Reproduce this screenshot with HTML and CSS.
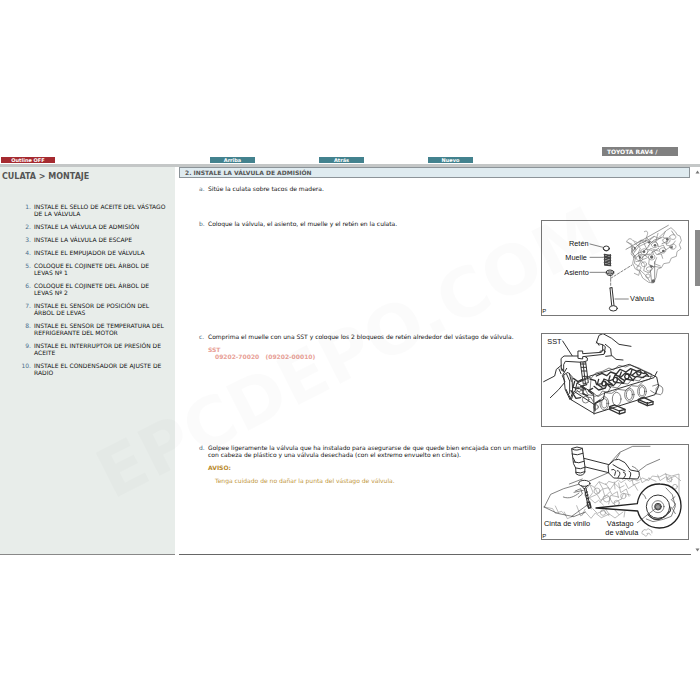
FILE: index.html
```
<!DOCTYPE html>
<html lang="es">
<head>
<meta charset="utf-8">
<meta name="viewport" content="width=device-width, initial-scale=1">
<title>Culata - Montaje</title>
<link rel="stylesheet" href="styles.css">
</head>
<body>
<div class="app">
  <header class="topbar">
    <button class="chip chip-red" type="button">Outline OFF</button>
    <nav class="pager">
      <a class="chip" href="#arriba">Arriba</a>
      <a class="chip" href="#atras">Atrás</a>
      <a class="chip" href="#nuevo">Nuevo</a>
    </nav>
    <div class="model">TOYOTA RAV4 /</div>
  </header>
  <div class="panes">
    <aside class="outline">
      <h1>CULATA &gt; MONTAJE</h1>
      <ol class="toc">
        <li>INSTALE EL SELLO DE ACEITE DEL VÁSTAGO<br>DE LA VÁLVULA</li>
        <li>INSTALE LA VÁLVULA DE ADMISIÓN</li>
        <li>INSTALE LA VÁLVULA DE ESCAPE</li>
        <li>INSTALE EL EMPUJADOR DE VÁLVULA</li>
        <li>COLOQUE EL COJINETE DEL ÁRBOL DE<br>LEVAS Nº 1</li>
        <li>COLOQUE EL COJINETE DEL ÁRBOL DE<br>LEVAS Nº 2</li>
        <li>INSTALE EL SENSOR DE POSICIÓN DEL<br>ÁRBOL DE LEVAS</li>
        <li>INSTALE EL SENSOR DE TEMPERATURA DEL<br>REFRIGERANTE DEL MOTOR</li>
        <li>INSTALE EL INTERRUPTOR DE PRESIÓN DE<br>ACEITE</li>
        <li>INSTALE EL CONDENSADOR DE AJUSTE DE<br>RADIO</li>
      </ol>
    </aside>
    <main class="content" id="arriba">
      <h2>2. INSTALE LA VÁLVULA DE ADMISIÓN</h2>
      <ol class="steps">
        <li class="step"><span class="mark">a.</span><div class="body"><p>Sitúe la culata sobre tacos de madera.</p></div></li>
        <li class="step"><span class="mark">b.</span><div class="body"><p>Coloque la válvula, el asiento, el muelle y el retén en la culata.</p></div>
          <figure>
            <svg viewBox="22 18 438 282" role="img" aria-label="Retén, muelle, asiento y válvula">
              <g class="thin">
                <path d="M166 87L205 97M166 127H206M166 172H213M241 252H281"/>
                <path d="M228 190L292 150M228 180V214" stroke-dasharray="7 5"/>
              </g>
              <g class="ink">
                <ellipse cx="215" cy="100" rx="9" ry="7"/><path d="M206 101c2 9 16 9 18 0"/>
                <ellipse cx="226" cy="171" rx="11" ry="6"/><path d="M215 171v5c4 7 18 7 22 0v-5M220 171h12"/>
                <path d="M226 219l5 52M232 218l6 53M226 219q3-3 6-1"/><ellipse cx="236" cy="280" rx="12" ry="8"/>
              </g>
              <path class="coil" d="M209 118l19 3-19 5 19 3-19 5 19 3-19 5 19 3-18 5 18 2M210 121v29M227 119v33"/>
              <g class="soft deep">
                <path d="M276 80c5-14 15-9 19-3l14 6 10-8 14 4 25-15 13 5 25-23 13-8 13 12 6 10 8 3 4 14-6 12 5 12-12 9-2 14-15 5-6 14-17 3-6 11-13 6-4 25-8 16-14-2-18-13-9-20-13-7-8-17 5-23-8-14 1-19z"/>
                <path d="M329 50c10-6 12 4 8 12l-5 18M358 65l-22 18-24 12-16 21M370 55l-7 24 16-12M280 82l14 13-3 20 12 9-4 21 12 8 10-18 15-6M299 83l18 16-7 18 22 4 16-21 23 8"/>
                <path d="M350 88c9-11 22-6 19 4s-20 7-19-4M384 75c9-12 25-8 22 3s-22 9-22-3M405 64c6-9 21-5 18 4s-19 6-18-4M319 106c9-10 24-3 19 8s-25 4-19-8"/>
                <path d="M342 123c7-11 22-5 18 6s-24 5-18-6M375 103c8-10 22-4 18 6s-24 5-18-6M406 92c9-10 21-3 17 6s-23 4-17-6M306 126c6-9 21-6 18 6s-23 5-18-6"/>
                <path d="M304 140l15-4 12 13-4 18 16 7 16-20 20 4M321 144c8-8 18-1 14 7s-20 3-14-7M336 159c7-8 18-3 15 5s-20 5-15-5M307 156c5-7 15-1 11 6s-15 2-11-6M334 180c6-7 15-1 11 6s-16 2-11-6"/>
                <path d="M338 70l10 12 16-3 8 17 14-6 7 15 18-12M357 106l9 13 14-2 4 13M329 88l8 15 15 3 4 10M392 49l-8 18 14 5-3 18 15 4 12-16"/>
                <path d="M327 118l17 13-2 17 18 8M289 98l10 12M289 117l14 15M299 175l13 6 4-16 19 18 10 16M366 128l-7 18 18 7M312 92l7-15 12 9"/>
              </g>
              <g class="line"><path d="M274 103L401 31M291 111l20-22 26-14M296 127l15-13 16-5 17-16M340 93l17-17 24-8M350 114l22-14M312 138l18-17 16-4M360 140v60l-9 3-4-38M411 48l8 12M382 86l18-8M370 117l20-9"/></g>
              <g class="blob"><circle cx="361" cy="91" r="4"/><circle cx="386" cy="108" r="4"/><circle cx="351" cy="126" r="5"/><circle cx="328" cy="110" r="4"/><circle cx="398" cy="73" r="4"/><circle cx="356" cy="198" r="5"/><path d="M295 93l9 5-3 10zM337 81l12-4-5 10zM344 149l13 5-8 6zM405 97l10-4-2 9zM310 119l10 7-5 8z"/></g>
              <text x="103" y="92">Retén</text><text x="92" y="134">Muelle</text><text x="89" y="179">Asiento</text><text x="286" y="259">Válvula</text><text class="tiny" x="23" y="294">P</text>
            </svg>
          </figure>
        </li>
        <li class="step"><span class="mark">c.</span><div class="body"><p>Comprima el muelle con una SST y coloque los 2 bloqueos de retén alrededor del vástago de válvula.</p>
          <dl class="tool"><dt>SST</dt><dd>09202-70020 &nbsp; (09202-00010)</dd></dl></div>
          <figure>
            <svg viewBox="22 18 438 276" role="img" aria-label="Compresión del muelle con SST">
              <g class="line dark">
                <path d="M119 197l10-9 9 10 10-3 8 12 13 2 7 12M130 176l10 12 12-3 8 15 16 3M180 205l15-4 8-12 16 4 10-17 19 4 13-14 19 2 12-14 21 5 12-14 28 1"/>
                <path d="M170 150l13-15 20-5 20-10 13 6 17-14 20 5 14-6 26 9 15 8 23 10-5 15-20 7-16 15-20-2-16 14-25-3-18 12-21-2-20 12-23-18z"/>
                <ellipse cx="209" cy="226" rx="13" ry="20"/><ellipse cx="246" cy="213" rx="13" ry="20"/><ellipse cx="284" cy="200" rx="14" ry="20"/><ellipse cx="322" cy="190" rx="13" ry="19"/>
                <ellipse cx="209" cy="226" rx="8" ry="14"/><ellipse cx="284" cy="200" rx="9" ry="15"/><ellipse cx="322" cy="190" rx="8" ry="14"/>
                <circle cx="153" cy="215" r="10"/><circle cx="184" cy="237" r="7"/><circle cx="133" cy="184" r="7"/>
                <path d="M354 174l16-5 12 8c5 6 2 20-4 23l-16-3-14-9M371 173l-7 9 1 15"/>
              </g>
              <g class="bold">
                <path d="M166 153l16 5 4 12 16-3 6-14 15 6 13-5 5-13 18 6 13-12 20 7 15-12 22 7M185 144l17-8 14 7 12-11 17 6 11-14 18 8 14-10 20 8M178 175l14 11 20-6 5-13 19 6 9-10 21 3 7-13 21 4 11-12 20 4 13-10M192 154l-4 15 14 9M226 144l-5 17 12 8M260 132l-6 16 16 10M292 125l-5 15 16 8M211 162l16 16M247 149l17 15M281 140l15 18M330 133l12 12M174 181l-13 7 12 10M156 170l-18 5 15 9M145 172v26l14 5M116 151l14 10 11-6M120 160l-5 18 18 4M181 248v-22l15-10M109 188l15 23 14-2"/>
                <path d="M201 166c2-10 14-8 13 1s-12 9-13-1M235 155c2-10 14-8 13 1s-12 9-13-1M270 145c2-10 14-8 13 1s-12 9-13-1M306 134c2-10 14-8 13 1s-12 9-13-1"/>
                <path class="fill" d="M225 236l15-5 31 13v9l-17 5-29-14zM311 214l15-6 29 13v8l-17 4-27-12z"/>
                <path d="M254 248v9M271 244l-17 5-29-12M338 224v9M355 221l-17 5-27-11"/>
              </g>
              <g class="ink">
                <path d="M84 39l31 48"/>
                <path class="fill" d="M80 91l8-7 60 0 10 6v8l-14 5-52-3-5 10v20l-6-3z"/>
                <path class="fill" d="M131 69h13v8l56-4 5-8 7 5-4 9-64 7v7l-13-2z"/>
                <path class="fill" d="M138 102l15 0 8 62-14 4z"/>
                <path d="M139 108h14M140 118h14M142 129h14M145 145h14M145 104l7 60"/>
                <path d="M185 45l8-23 12-5 26 14 22 18 36 6M213 85l19-2 12 11 21 2M193 52l-7-10M191 47l13 3v18l-8 2M204 50l8 6-3 20M212 49l16 13 2 19"/>
                <path d="M81 111l-16 13-5 20-33 17M96 121l-13 22 8 19-19 23-25 24M73 123l6 14M80 120l9 12"/>
                <path d="M88 140l12-7 12 13 2 47-8 22-14-30zM96 139l9 20v37M104 136l6 24"/>
                <path d="M94 184l15 31 70 42 182-57 11-25-6-28-82-38-118 35-28 14"/>
                <path d="M110 215l8-25 60 39v29M178 229l28-15 4-20 24-7 124-38 9-18M121 190l6-25 50 31 1 33M127 165l40-17"/>
              </g>
              <text x="38" y="47">SST</text>
            </svg>
          </figure>
        </li>
        <li class="step"><span class="mark">d.</span><div class="body"><p>Golpee ligeramente la válvula que ha instalado para asegurarse de que quede bien encajada con un martillo con cabeza de plástico y una válvula desechada (con el extremo envuelto en cinta).</p>
          <div class="notice"><strong>AVISO:</strong><p>Tenga cuidado de no dañar la punta del vástago de válvula.</p></div></div>
          <figure>
            <svg viewBox="22 16 438 282" role="img" aria-label="Golpeo de la válvula con un martillo">
              <g class="soft">
                <path d="M155 147l11-12 13 8 14-17 21 9 8-10 17 5 12-9 8 8 17-11 9 7 14-6 8 5 17-9 18 8 11-14 21 3 17-9 20 6 22-6v88M155 148l-5 18 9 16-4 16 16 10"/>
                <path d="M166 136l9 22-12 16 18 16 11-8 14 14M180 143l9 18 15-13 7 23 14-14M193 127l12 21 16-4 11 21 16-9 3 18M213 132l13 18 14-19 14 14 14-7M239 127l2 21M252 130l6 29 17-11 8 22M272 130l9 17 18-12 10 17M292 119l4 17 18-8M316 111l6 18 22-13M342 115l22 10M369 106l7 17 17-11 17 14M393 101l5 19 23-11 17 14M167 173l20-9 11 18 24-12 13 22 23-13M197 188l11-18M222 193l6-26 24 5M259 180l8-19 20 5"/>
                <path d="M29 202l25 5 8 14 19-6 13 14M62 199l10 21M89 217l9 20 19-8M126 198l12 31 14-12 17 19 13-16 18 14 24-11 17 12 24-18M151 209l-9 18M174 207l14 14 18-8 17 15M213 208l11 17M238 208l15 17M271 213l-3 19M323 275q4-9 12-4 5-8 12 0 7 1 5 9M325 274c-6 3-4 12 3 10 2 7 9 7 11 0M337 281q8-4 11 5"/>
                <circle cx="187" cy="154" r="9"/><circle cx="216" cy="177" r="10"/><circle cx="266" cy="169" r="8"/><circle cx="246" cy="190" r="8"/><circle cx="205" cy="219" r="8"/><circle cx="404" cy="119" r="8"/><circle cx="421" cy="141" r="7"/>
              </g>
              <g class="thin"><path d="M222 75l33-37 39-18 52 0M228 96l-66 29-75 22-39 17-19 38M256 40l-12 19M312 94l24-18 39-17M104 133l39-15M118 158l28-6M86 172c17 7 33-1 47-12M28 202l40 19 49 10 35-14M122 154l16-7 5 16-12 10M293 80c9 4 16 8 18 16"/><path d="M111 230l47-34"/></g>
              <g class="ink">
                <path class="fill" d="M148 56l83 21-5 23-78-19z"/>
                <path class="fill" d="M112 26q15-8 31 0l8 56-1 18q-12 13-26 2l-1-17-6-12z"/>
                <path d="M112 28q14 8 31-2M112 43q16 6 33-2M118 67q14 6 30-2M123 85q14 6 28-2M123 98q14 5 28-2M116 55l6 13"/>
                <path class="fill" d="M221 77l18-16 13-2 19 10 16 22 26 5 1 12-5 10-72-3-14-14z"/>
                <path d="M231 90q8-4 12 5l-3 12M248 93q10 2 7 12l-5 9M266 97q9 3 6 11l-7 10M283 94q8 5 5 12l-4 12M235 75l15 9 21 10"/>
                <ellipse class="fill" cx="149" cy="131" rx="17" ry="9"/><path d="M140 138l9 10 10-11M149 146l12 57M154 146l13 57"/>
              </g>
              <g class="bold"><path d="M153 159l5-2M155 168l5-2M157 177l5-2M158 188l7-1 4 16-7 3z"/></g>
              <g class="ring">
                <path class="fill" d="M184 205l124-13c4-36 33-60 68-59 37 0 63 28 63 65s-28 67-65 67c-34 0-58-23-65-51z"/>
              </g>
              <g class="ink"><circle cx="370" cy="201" r="35"/><path d="M342 228q30 30 65-13M339 223q26 38 68-9l2-11"/></g>
              <g class="thin"><circle cx="370" cy="201" r="18"/><path d="M323 162q8 4 11 15M335 238l20 8 31-7 24-9 12-30-9-35-19-20M421 171l-11 9 13 13-10 14 9 15M308 249l58-45"/></g>
              <circle class="bolt" cx="370" cy="201" r="10"/><path class="thin" d="M363 198l7-4 7 4v7l-7 4-7-4z"/>
              <text x="28" y="259">Cinta de vinilo</text><text x="216" y="260">Vástago</text><text x="212" y="286">de válvula</text><text class="tiny" x="23" y="294">P</text>
            </svg>
          </figure>
        </li>
      </ol>
    </main>
    <div class="scroll" aria-hidden="true">
      <svg class="arrow" viewBox="0 0 10 8"><path d="M1 7L5 1 9 7z"/></svg>
      <span class="thumb"></span>
      <svg class="arrow arrow-end" viewBox="0 0 10 8"><path d="M1 1L5 7 9 1z"/></svg>
    </div>
  </div>
  <div class="watermark" aria-hidden="true">EPCDEPO.COM</div>
</div>
</body>
</html>
```
FILE: styles.css
```
* { box-sizing: border-box; }
body {
  margin: 0;
  padding-top: 143px;
  background: #fff;
  color: #111;
  font: 6px/7px "DejaVu Sans", Verdana, sans-serif;
}
h1, h2, p, ol, dl, dd, figure { margin: 0; padding: 0; }
ol { list-style: none; }

.app { position: relative; overflow: hidden; }

.topbar {
  display: flex;
  align-items: flex-end;
  height: 24px;
  padding: 0 22px 1px 1px;
  border-bottom: 3px solid #c4c7c7;
}
.chip {
  display: block;
  width: 45px;
  height: 6px;
  padding: 0;
  border: 0;
  background: #43828e;
  color: #fff;
  font: bold 5px/6px "DejaVu Sans", Verdana, sans-serif;
  text-align: center;
  text-decoration: none;
}
.chip-red { width: 54px; background: #a52a30; }
.pager { display: flex; gap: 64px; margin-left: 155px; }
.model {
  align-self: flex-start;
  width: 76px;
  height: 9px;
  margin: 4px 0 0 auto;
  padding-left: 5px;
  background: #808080;
  color: #fff;
  font-weight: bold;
  line-height: 10px;
}

.panes {
  display: grid;
  grid-template-columns: 175px minmax(0, 1fr) 5px;
  column-gap: 4px;
}
.outline { background: #e8edea; border-bottom: 1px solid #888; }
.outline h1 {
  padding: 5px 2px 0;
  color: #555;
  font-size: 8px;
  line-height: 9px;
}
.toc { padding: 22px 0 0 19px; counter-reset: item; }
.toc li {
  display: grid;
  grid-template-columns: 12px auto;
  column-gap: 3px;
  margin-bottom: 6px;
  counter-increment: item;
  white-space: nowrap;
}
.toc li::before {
  content: counter(item) ".";
  grid-row: 1 / 3;
  color: #4a6d8c;
  text-align: right;
}

.content { border-bottom: 1px solid #666; padding-bottom: 14px; }
.content h2 {
  margin-right: 1px;
  padding-left: 5px;
  border: 1px solid #8c9499;
  background: #dfebf0;
  color: #555;
  font-size: 6px;
  line-height: 9px;
}
.steps { padding: 7px 2px 0 20px; }
.step { display: flex; min-height: 35px; }
.step:nth-child(2) { margin-bottom: 17px; }
.step:nth-child(3) { margin-bottom: 17px; }
.mark { flex: 0 0 9px; color: #4d6678; }
.body { flex: 1; padding-right: 4px; }
.tool { padding-top: 6px; color: #e8a096; font-weight: bold; }
.tool dd { padding-left: 7px; }
.notice { padding-top: 6px; color: #bf9740; }
.notice strong { color: #b98a2c; }
.notice p { padding: 6px 7px 0; }

figure { flex: 0 0 148px; border: 1px solid #777; }
figure svg { display: block; width: 100%; }
svg path, svg circle, svg ellipse { fill: none; stroke-linejoin: round; stroke-linecap: round; }
.thin { stroke: #444; stroke-width: 2; }
.ink { stroke: #333; stroke-width: 3; }
.line { stroke: #666; stroke-width: 2; }
.line.dark { stroke: #444; }
.soft { stroke: #999; stroke-width: 2; }
.soft.deep { stroke: #808080; }
.bold { stroke: #333; stroke-width: 4; }
.coil { stroke: #444; stroke-width: 4; }
.ring { stroke: #222; stroke-width: 4; }
svg .fill { fill: #fff; }
.blob path, .blob circle { fill: #666; }
svg .bolt { fill: #999; stroke: #444; stroke-width: 3; }
figure text { fill: #111; font: 22px "Liberation Sans", Arial, sans-serif; }
figure .tiny { font-size: 18px; }

.scroll { display: flex; flex-direction: column; padding: 3px 0; }
.arrow { width: 5px; height: 4px; }
.arrow path { fill: #777; }
.arrow-end { margin-top: auto; }
.thumb { height: 56px; margin-top: 56px; background: #8a8a8a; }

.watermark {
  position: absolute;
  top: 51%;
  left: 50%;
  transform: translate(-50%, -50%) rotate(-27deg);
  color: rgba(0, 0, 0, 0.016);
  font-size: 68px;
  font-weight: bold;
  line-height: 1;
  white-space: nowrap;
  pointer-events: none;
}
```
